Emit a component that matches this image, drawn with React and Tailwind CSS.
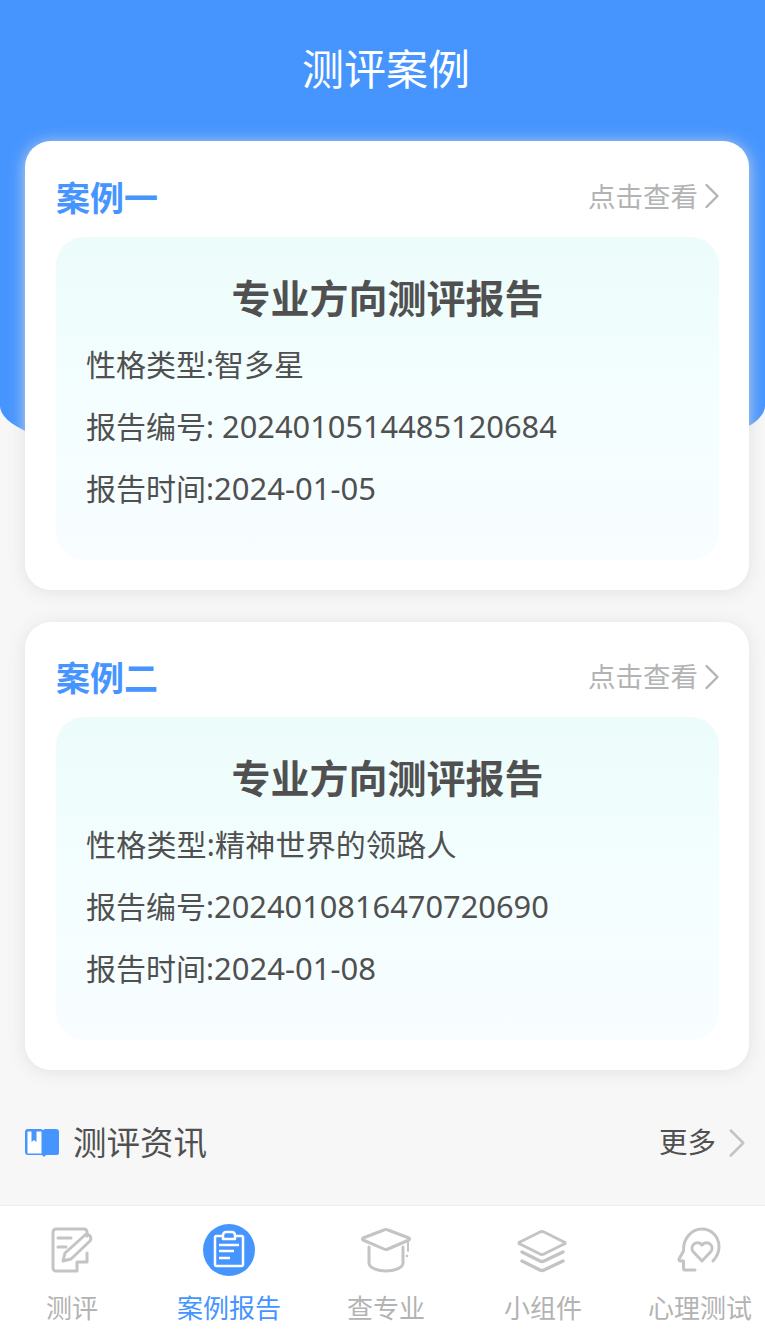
import { ChevronRight } from "lucide-react";

const cases = [
  {
    name: "案例一",
    type: "智多星",
    typeClass: "",
    no: " 20240105144851" + "20684",
    time: "2024-01-05",
  },
  {
    name: "案例二",
    type: "精神世界的领路人",
    typeClass: "tracking-[0.2px]",
    no: "20240108164707" + "20690",
    time: "2024-01-08",
  },
];

const EvalIcon = () => (
  <svg width="52" height="52" viewBox="0 0 52 52" fill="none" stroke="#c4c4c4" strokeWidth="3" strokeLinecap="round" strokeLinejoin="round">
    <path d="M41 12V8a3 3 0 0 0-3-3H10a3 3 0 0 0-3 3v36a3 3 0 0 0 3 3h21v-9h10v-9" />
    <path d="M12 14h13M12 23h8" />
    <path d="M17 37l2-8L38 12a3 3 0 0 1 6 5L25 35z" />
  </svg>
);

const ReportIcon = () => (
  <svg width="52" height="52" viewBox="0 0 52 52" fill="none">
    <circle cx="26" cy="26" r="26" fill="#4695ff" />
    <rect x="12" y="12" width="28" height="30" rx="1.5" stroke="#fff" strokeWidth="2.5" />
    <path d="M20 15v-4a3 3 0 0 1 3-3h6a3 3 0 0 1 3 3v4z" fill="#4695ff" stroke="#fff" strokeWidth="2.5" strokeLinejoin="round" />
    <path d="M16 21h20M16 27h15M16 34h11" stroke="#fff" strokeWidth="2.5" />
  </svg>
);

const MajorIcon = () => (
  <svg width="52" height="52" viewBox="0 0 52 52" fill="none" stroke="#c4c4c4" strokeWidth="3" strokeLinecap="round" strokeLinejoin="round">
    <path d="M24 6a5 5 0 0 1 4 0l21 8a1.2 1.2 0 0 1 0 2l-21 9a5 5 0 0 1-4 0L3 16a1.2 1.2 0 0 1 0-2z" />
    <path d="M9 23v16c0 5 9 8 17 8s17-3 17-8V23" />
    <path d="M48 18v9" strokeWidth="2" />
    <circle cx="47" cy="32" r="0.6" strokeWidth="1.5" />
  </svg>
);

const LayersIcon = () => (
  <svg width="52" height="52" viewBox="0 0 52 52" fill="none" stroke="#c4c4c4" strokeWidth="3" strokeLinecap="round" strokeLinejoin="round">
    <path d="M23 8a4 4 0 0 1 4 0l20 10a1 1 0 0 1 0 2L27 30a4 4 0 0 1-4 0L3 20a1 1 0 0 1 0-2z" />
    <path d="M5 28l18 9a4 4 0 0 0 4 0l19-9" strokeWidth="3.5" />
    <path d="M5 37l18 9a4 4 0 0 0 4 0l19-9" strokeWidth="3.5" />
  </svg>
);

const MindIcon = () => (
  <svg width="52" height="52" viewBox="0 0 52 52" fill="none" stroke="#c4c4c4" strokeWidth="3" strokeLinecap="round" strokeLinejoin="round">
    <path d="M21 46H11a1.5 1.5 0 0 1-1.500-1.500V37H6.500a1.500 1.500 0 0 1-1.300-2.300L9.500 27C9 15 17 5 28 5c10 0 17 8 17 18 0 6-2.500 10-6 14" />
    <path d="M28 37l-8.500-9a5.500 5.500 0 0 1 0-7.500 5.500 5.500 0 0 1 8.500 0.500 5.500 5.500 0 0 1 8.500-0.500 5.500 5.500 0 0 1 0 7.500z" />
  </svg>
);

const tabs = [
  { label: "测评", icon: <EvalIcon /> },
  { label: "案例报告", icon: <ReportIcon />, active: true },
  { label: "查专业", icon: <MajorIcon /> },
  { label: "小组件", icon: <LayersIcon /> },
  { label: "心理测试", icon: <MindIcon /> },
];

const CaseCard = ({ item }) => (
  <div className="rounded-[26px] bg-white pb-[30.6px] pl-[31px] pr-[30px] shadow-[0_2px_16px_rgba(222,222,222,0.85)]">
    <div className="flex h-[95.2px] items-center justify-between pt-[18px]">
      <span className="text-[34px] font-bold leading-none text-[#4695ff]">{item.name}</span>
      <span className="mb-[3px] flex items-center text-[27.5px] leading-none text-[#b3b3b3]">
        点击查看
        <ChevronRight size={44} strokeWidth={1.3} className="ml-[-8.5px] mr-[-14.5px] text-[#b3b3b3]" />
      </span>
    </div>
    <div className="h-[323px] rounded-[28px] bg-linear-to-b from-[#ecfcfb] via-[#f4feff] to-[#f8fdff] px-[30px] pt-[36px] text-[#505050]">
      <div className="text-center text-[39px] font-bold leading-[50px]">专业方向测评报告</div>
      <div className="mt-[11px] text-[30px] leading-[62px]">
        <div className={item.typeClass}>性格类型:{item.type}</div>
        <div>
          报告编号:<span className="whitespace-pre text-[30.8px] leading-none">{item.no}</span>
        </div>
        <div>
          报告时间:<span className="text-[31px] leading-none">{item.time}</span>
        </div>
      </div>
    </div>
  </div>
);

export default function App() {
  return (
    <div className="relative flex h-[1329px] w-[765px] flex-col overflow-hidden bg-[#f7f7f7] font-['Noto_Sans','Noto_Sans_CJK_SC',sans-serif]">
      <div className="absolute left-0 top-0 h-[476px] w-full rounded-bl-[50%_70px] rounded-br-[50%_70px] bg-[#4695ff]" />

      <div className="relative flex h-[141.4px] items-center justify-center pb-[4px] pl-[7px]">
        <h1 className="text-[42px] font-normal leading-none text-white">测评案例</h1>
      </div>

      <div className="relative flex flex-col gap-[31.4px] pl-[25px] pr-[16px]">
        {cases.map((item) => (
          <CaseCard key={item.name} item={item} />
        ))}
      </div>

      <div className="relative flex flex-1 items-center justify-between pl-[25px] pr-[21px] pt-[10px]">
        <div className="flex items-center">
          <svg width="34" height="28" viewBox="0 0 34 28" fill="none">
            <path d="M3 0h13l2 1 2-1h11a3 3 0 0 1 3 3v21a2 2 0 0 1-2 2H21l-2 2-2-2H3a3 3 0 0 1-3-3V3a3 3 0 0 1 3-3z" fill="#4695ff" />
            <path d="M2.500 2.500h4V13l2.500-2 2.500 2V2.500h5V24.500H2.500z" fill="#fff" />
          </svg>
          <span className="ml-[14px] text-[33.5px] leading-none text-[#505050]">测评资讯</span>
        </div>
        <div className="flex items-center">
          <span className="text-[28.5px] leading-none text-[#505050]">更多</span>
          <ChevronRight size={50} strokeWidth={1.2} className="ml-[-4.5px] mr-[-17.5px] text-[#c4c4c4]" />
        </div>
      </div>

      <div className="relative flex h-[124px] border-t border-[#ececec] bg-white">
        <div className="ml-[-6.5px] flex">
          {tabs.map((tab) => (
            <div key={tab.label} className="flex w-[157px] flex-col items-center pt-[18px]">
              {tab.icon}
              <span className={`mt-[19px] text-[26px] leading-none ${tab.active ? "text-[#4695ff]" : "text-[#b3b3b3]"}`}>
                {tab.label}
              </span>
            </div>
          ))}
        </div>
      </div>
    </div>
  );
}
